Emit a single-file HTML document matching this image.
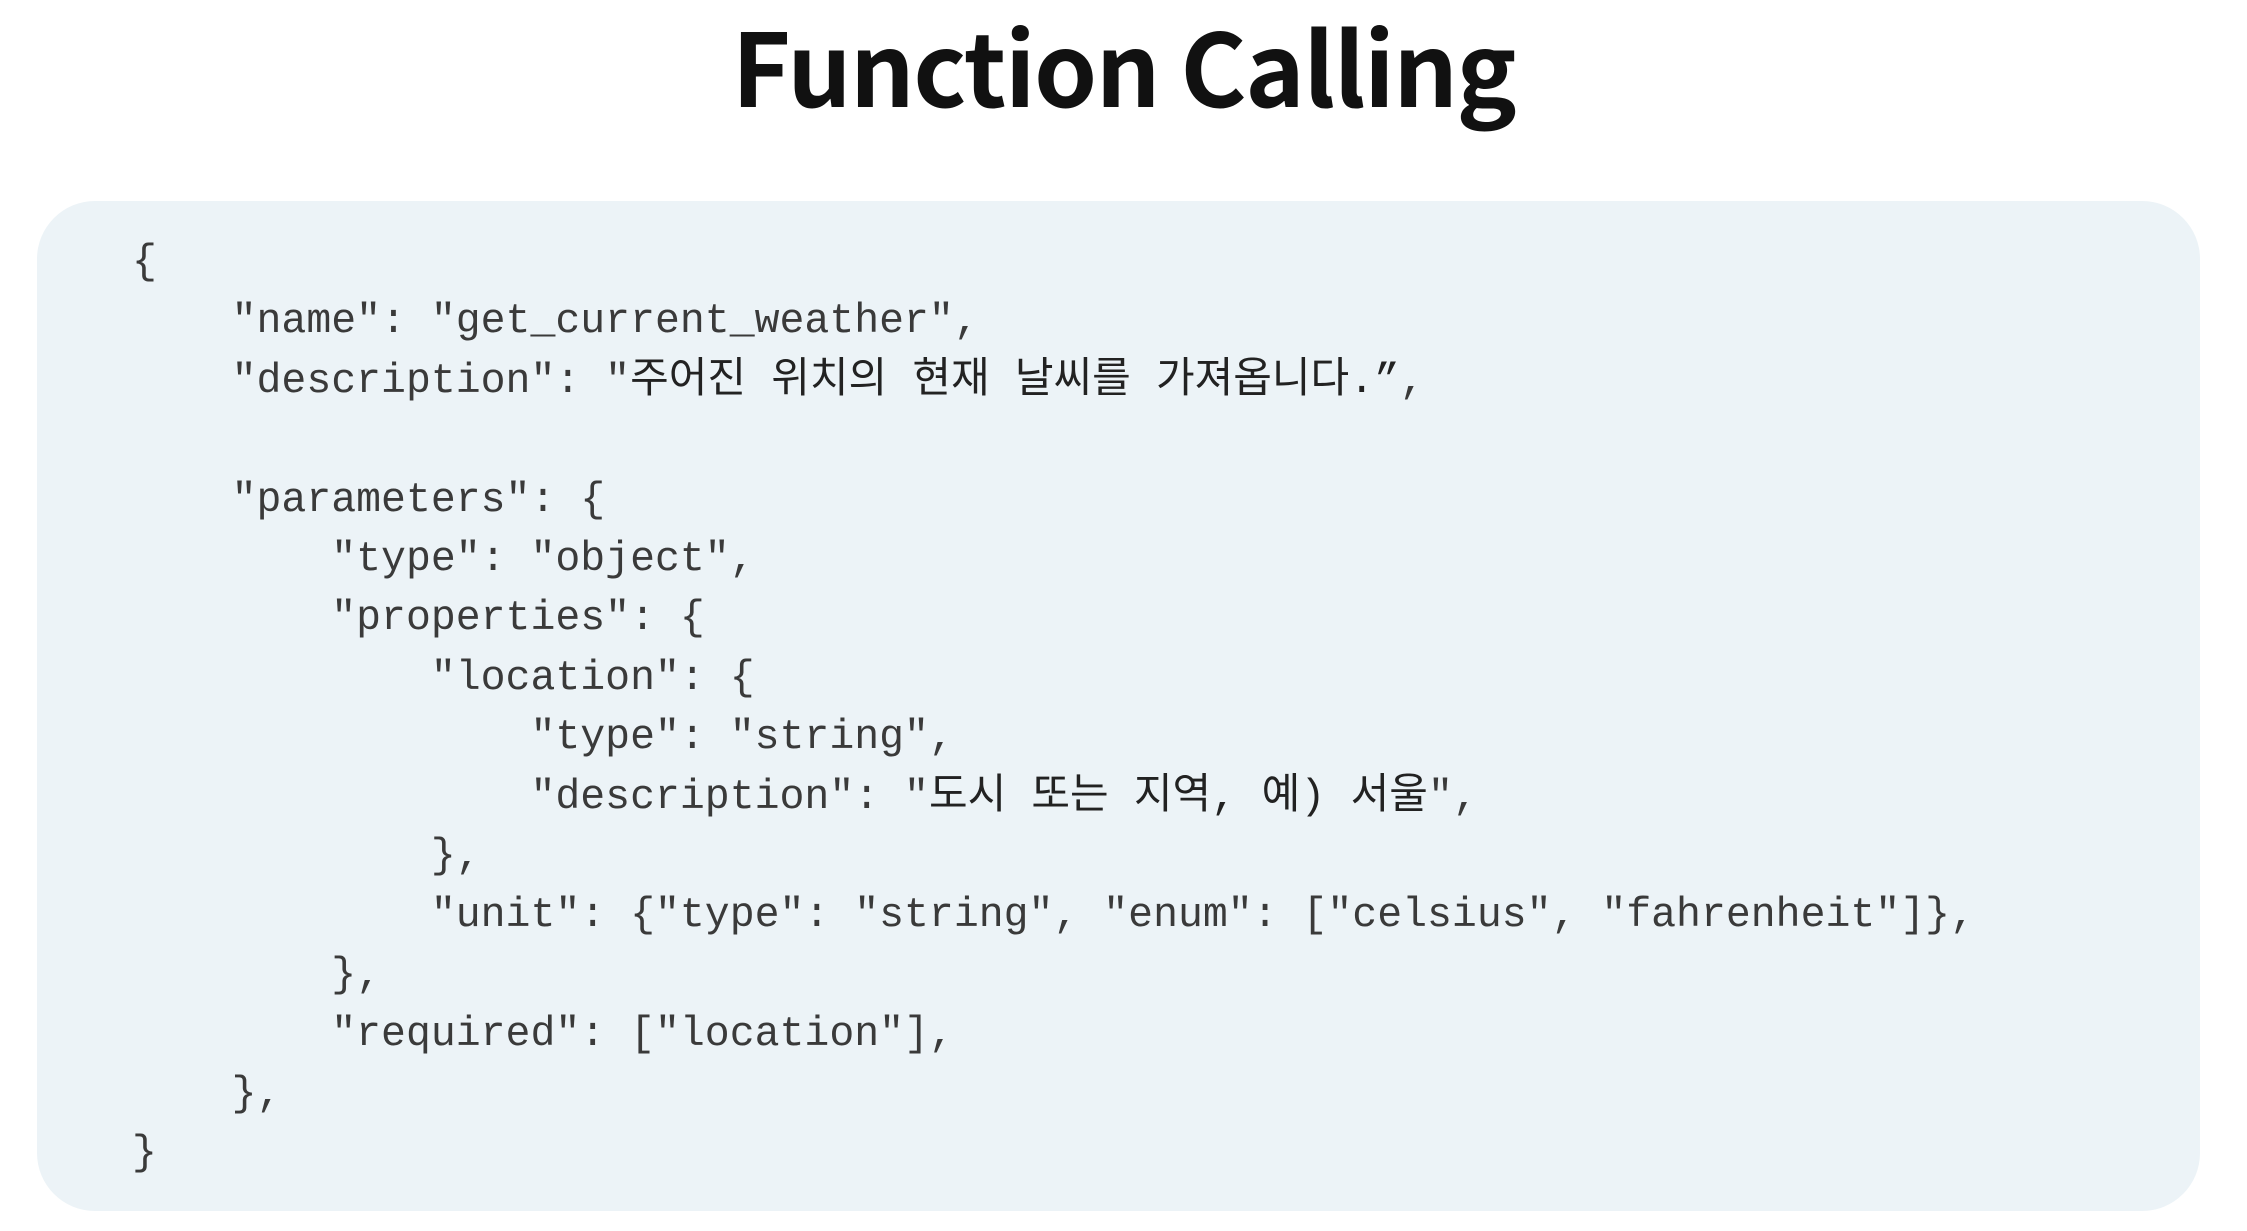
<!DOCTYPE html>
<html><head><meta charset="utf-8"><style>
html,body{margin:0;padding:0;background:#fff;width:2247px;height:1231px;overflow:hidden}
h1{position:absolute;left:0;width:2247px;top:-6px;margin:0;text-align:center;font-family:"Noto Sans CJK KR","Liberation Sans",sans-serif;font-weight:700;font-size:101px;line-height:140px;color:#111;letter-spacing:-1.5px}
.box{position:absolute;left:37px;top:201px;width:2163px;height:1010px;background:#ecf3f7;border-radius:58px}
pre{position:absolute;left:132px;top:233px;margin:0;font-family:"Liberation Mono","Noto Sans CJK KR",monospace;font-size:41.5px;line-height:59.4px;color:#3a3a3a}
.k{font-family:"Liberation Mono","Noto Sans CJK KR",monospace;color:#222;font-size:42px}
</style></head><body>
<h1>Function Calling</h1>
<div class="box"></div>
<pre>{
    "name": "get_current_weather",
    "description": "<span class="k">주어진 위치의 현재 날씨를 가져옵니다.”</span>,

    "parameters": {
        "type": "object",
        "properties": {
            "location": {
                "type": "string",
                "description": "<span class="k">도시 또는 지역, 예) 서울</span>",
            },
            "unit": {"type": "string", "enum": ["celsius", "fahrenheit"]},
        },
        "required": ["location"],
    },
}</pre>
</body></html>
